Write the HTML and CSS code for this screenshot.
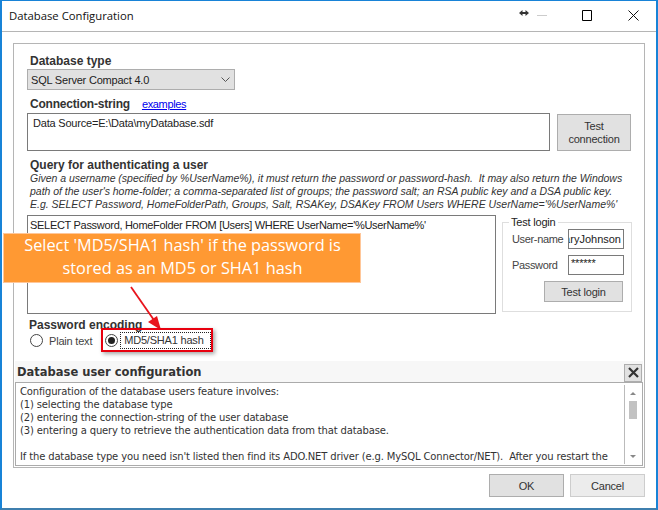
FILE: index.html
```html
<!DOCTYPE html>
<html lang="en">
<head>
<meta charset="utf-8">
<title>Database Configuration</title>
<link rel="stylesheet" href="styles.css">
</head>
<body>
<div class="window">
  <header class="titlebar">
    <span class="title">Database Configuration</span>
    <div class="controls">
      <svg class="resize" width="10" height="6" viewBox="0 0 10 6"><path d="M0 3 3.500 0V2H6.500V0L10 3 6.500 6V4H3.500V6Z" fill="#333"/></svg>
      <svg class="min" width="10" height="1" viewBox="0 0 10 1"><path d="M0 .5H10" stroke="#ccc"/></svg>
      <svg class="max" width="10" height="11" viewBox="0 0 10 11"><path d="M.5.5H9.500V10.500H.5Z" fill="none" stroke="#000"/></svg>
      <svg class="close" width="11" height="11" viewBox="0 0 11 11"><path d="M.5.500 10.500 10.500M10.500.500 .5 10.500" stroke="#111" fill="none"/></svg>
    </div>
  </header>
  <main class="panel">
    <div class="form">
      <h2 class="label first">Database type</h2>
      <div class="select"><span>SQL Server Compact 4.0</span>
        <svg width="9" height="5" viewBox="0 0 9 5"><path d="M.5.5 4.500 4.500 8.500.5" fill="none" stroke="#555"/></svg>
      </div>
      <div class="conn-head"><h2 class="label conn-label">Connection-string</h2><a class="link" href="#">examples</a></div>
      <div class="conn-row">
        <div class="box conn">Data Source=E:\Data\myDatabase.sdf</div>
        <button class="btn test-conn">Test<br>connection</button>
      </div>
      <h2 class="label query-label">Query for authenticating a user</h2>
      <p class="hint">Given a username (specified by %UserName%), it must return the password or password-hash.&nbsp; It may also return the Windows<br>path of the user's home-folder; a comma-separated list of groups; the password salt; an RSA public key and a DSA public key.<br>E.g. SELECT Password, HomeFolderPath, Groups, Salt, RSAKey, DSAKey FROM Users WHERE UserName='%UserName%'</p>
      <div class="query-row">
        <div class="box query">SELECT Password, HomeFolder FROM [Users] WHERE UserName='%UserName%'</div>
        <fieldset class="login">
          <legend>Test login</legend>
          <div class="field"><label>User-name</label><div class="input clip"><span>MaryJohnson</span></div></div>
          <div class="field"><label>Password</label><div class="input stars">******</div></div>
          <button class="btn test-login">Test login</button>
        </fieldset>
      </div>
      <h2 class="label enc-label">Password encoding</h2>
      <div class="radios">
        <span class="radio"></span><span class="plain">Plain text</span>
        <span class="radio on"></span><span class="md5">MD5/SHA1 hash</span>
      </div>
    </div>
    <section class="help">
      <div class="help-head"><h3>Database user configuration</h3>
        <button class="help-close"><svg width="11" height="11" viewBox="0 0 11 11"><path d="M1 1 10 10M10 1 1 10" stroke="#333" stroke-width="2.200" fill="none"/></svg></button>
      </div>
      <div class="help-body">
        <div class="help-text">Configuration of the database users feature involves:<br>(1) selecting the database type<br>(2) entering the connection-string of the user database<br>(3) entering a query to retrieve the authentication data from that database.<br><br>If the database type you need isn't listed then find its ADO.NET driver (e.g. MySQL Connector/NET).&nbsp; After you restart the</div>
        <div class="scroll"><i class="up"></i><b></b><i class="down"></i></div>
      </div>
    </section>
  </main>
  <footer class="actions">
    <button class="btn ok">OK</button>
    <button class="btn cancel">Cancel</button>
  </footer>
  <div class="callout">Select 'MD5/SHA1 hash' if the password is<br>stored as an MD5 or SHA1 hash</div>
  <svg class="arrow" width="40" height="50" viewBox="0 0 40 50"><path d="M1 1 26 37" stroke="#e8141c" stroke-width="1.800" fill="none"/><path d="M31 44 18 36 27 30Z" fill="#e8141c"/></svg>
  <div class="highlight"></div>
</div>
</body>
</html>
```
FILE: styles.css
```css
* { box-sizing: border-box; }
html, body { margin: 0; padding: 0; background: #fff; }
body { width: 658px; height: 510px; overflow: hidden; font-family: "Liberation Sans", Arial, sans-serif; font-size: 11px; letter-spacing: -.2px; color: #222; }
.window { position: relative; width: 658px; height: 510px; border: 1px solid #1883d7; border-left-width: 2px; border-right-width: 2px; border-bottom: 2px solid #3f7fae; display: flex; flex-direction: column; background: #fff; }
.titlebar { height: 31px; flex: none; border-bottom: 1px solid #b5b5b5; display: flex; align-items: center; justify-content: space-between; padding: 0 0 1px 7px; }
.title { font-family: "Open Sans", sans-serif; font-size: 11.300px; letter-spacing: 0; color: #111; }
.controls { display: flex; align-items: center; }
.resize { margin: 0 8px 5px 0; }
.min { margin-right: 35px; }
.max { margin-right: 36px; }
.close { margin-right: 17px; }
.panel { margin: 11px 0 0 11px; width: 632px; height: 425px; flex: none; border: 1px solid #b5b5b5; display: flex; flex-direction: column; justify-content: space-between; }
.form { padding: 0 13px 0 13px; }
.label { margin: 0; font-size: 12px; font-weight: bold; color: #333; line-height: 14px; letter-spacing: 0; }
.label.first { margin: 10px 0 1px 3px; }
.select { width: 208px; height: 21px; background: #e1e1e1; border: 1px solid #adadad; display: flex; align-items: center; justify-content: space-between; padding: 0 4px 0 3px; color: #222; }
.conn-head { display: flex; align-items: center; gap: 12px; margin: 6px 0 1px 3px; height: 16px; }
.conn-label { letter-spacing: -.2px; }
.link { color: #0000ee; text-decoration: underline; font-size: 11px; letter-spacing: -.35px; }
.conn-row { display: flex; justify-content: space-between; align-items: flex-end; }
.box { background: #fff; border: 1px solid #7a7a7a; }
.conn { width: 523px; height: 38px; padding: 2px 5px; line-height: 15px; }
.btn { font: inherit; letter-spacing: inherit; color: #333; background: #e1e1e1; border: 1px solid #adadad; padding: 0; }
.test-conn { width: 74px; height: 37px; line-height: 13px; }
.query-label { margin: 7px 0 0 3px; line-height: 14px; }
.hint { margin: 0 0 4px 3px; font-style: italic; font-size: 10.500px; letter-spacing: -.02px; line-height: 13px; color: #333; white-space: nowrap; }
.query-row { display: flex; justify-content: space-between; align-items: flex-start; }
.query { width: 469px; height: 99px; padding: 2px 2px; line-height: 15px; letter-spacing: -.3px; }
.login { width: 130px; height: 97px; margin: 0 -1px 0 0; padding: 0 7px 0 10px; border: 1px solid #dedede; min-inline-size: 0; }
.login legend { padding: 0 3px 0 2px; margin-left: -4px; color: #222; line-height: 14px; }
.field { display: flex; align-items: center; justify-content: space-between; height: 20px; margin-bottom: 6px; color: #444; white-space: nowrap; }
.field label { margin-left: -1px; letter-spacing: -.35px; }
.input { width: 56px; height: 20px; border: 1px solid #7a7a7a; background: #fff; color: #222; line-height: 18px; overflow: hidden; flex: none; }
.clip { display: flex; justify-content: flex-end; padding-right: 2px; white-space: nowrap; letter-spacing: 0; }
.stars { padding-left: 2px; font-size: 11px; line-height: 14px; }
.test-login { display: block; width: 79px; height: 21px; margin: 1px 0 0 31px; }
.enc-label { margin: 4px 0 0 2px; }
.radios { display: flex; align-items: center; height: 17px; margin: 0 0 0 3px; color: #444; }
.radio { width: 13px; height: 13px; border: 1px solid #444; border-radius: 50%; background: #fff; flex: none; position: relative; }
.radio.on::after { content: ""; position: absolute; left: 2px; top: 2px; width: 7px; height: 7px; border-radius: 50%; background: #222; }
.plain { margin: 0 13px 0 6px; }
.md5 { margin-left: 2px; padding: 0 6px 0 3px; border: 1px dotted #222; line-height: 15px; color: #333; }
.help { margin: 0 0 1px 1px; width: 628px; }
.help-head { height: 21px; background: #f7f7f7; display: flex; align-items: center; justify-content: space-between; }
.help-head h3 { margin: 0 0 0 2px; font: bold 11.500px "DejaVu Sans", sans-serif; letter-spacing: 0; color: #333; }
.help-close { width: 18px; height: 18px; margin: 2px 1px 0 0; background: #e1e1e1; border: 1px solid #adadad; padding: 0; display: flex; align-items: center; justify-content: center; }
.help-body { height: 84px; border: 1px solid #ababab; display: flex; justify-content: space-between; padding: 1px; }
.help-text { padding: 1px 0 0 3px; font-family: "DejaVu Sans", sans-serif; font-size: 10px; letter-spacing: -.15px; line-height: 13px; color: #333; white-space: nowrap; overflow: hidden; }
.scroll { width: 17px; height: 79px; margin-top: 1px; border-left: 1px solid #bbb; position: relative; flex: none; }
.scroll b { position: absolute; left: 4px; top: 16px; width: 8px; height: 18px; background: #c2c2c2; }
.scroll i { position: absolute; left: 5px; width: 0; height: 0; border-left: 3px solid transparent; border-right: 3px solid transparent; }
.scroll .up { top: 7px; border-bottom: 3px solid #888; }
.scroll .down { bottom: 6px; border-top: 3px solid #888; }
.actions { display: flex; justify-content: flex-end; gap: 6px; padding: 6px 11px 0 0; }
.ok { width: 75px; height: 23px; }
.cancel { width: 75px; height: 23px; background: #ececec; border-color: #cdcdcd; }
.callout { position: absolute; left: 1px; top: 232px; width: 358px; height: 50px; background: #ff9933; border: 1px solid #ffc79a; color: #fff; font-family: "Open Sans", sans-serif; font-size: 16.300px; letter-spacing: 0; line-height: 23px; text-align: center; padding-left: 1px; }
.arrow { position: absolute; left: 128px; top: 285px; }
.highlight { position: absolute; left: 99px; top: 327px; width: 112px; height: 24px; border: 2px solid #e8000f; box-shadow: 2px 2px 4px rgba(0,0,0,.35); }
```
